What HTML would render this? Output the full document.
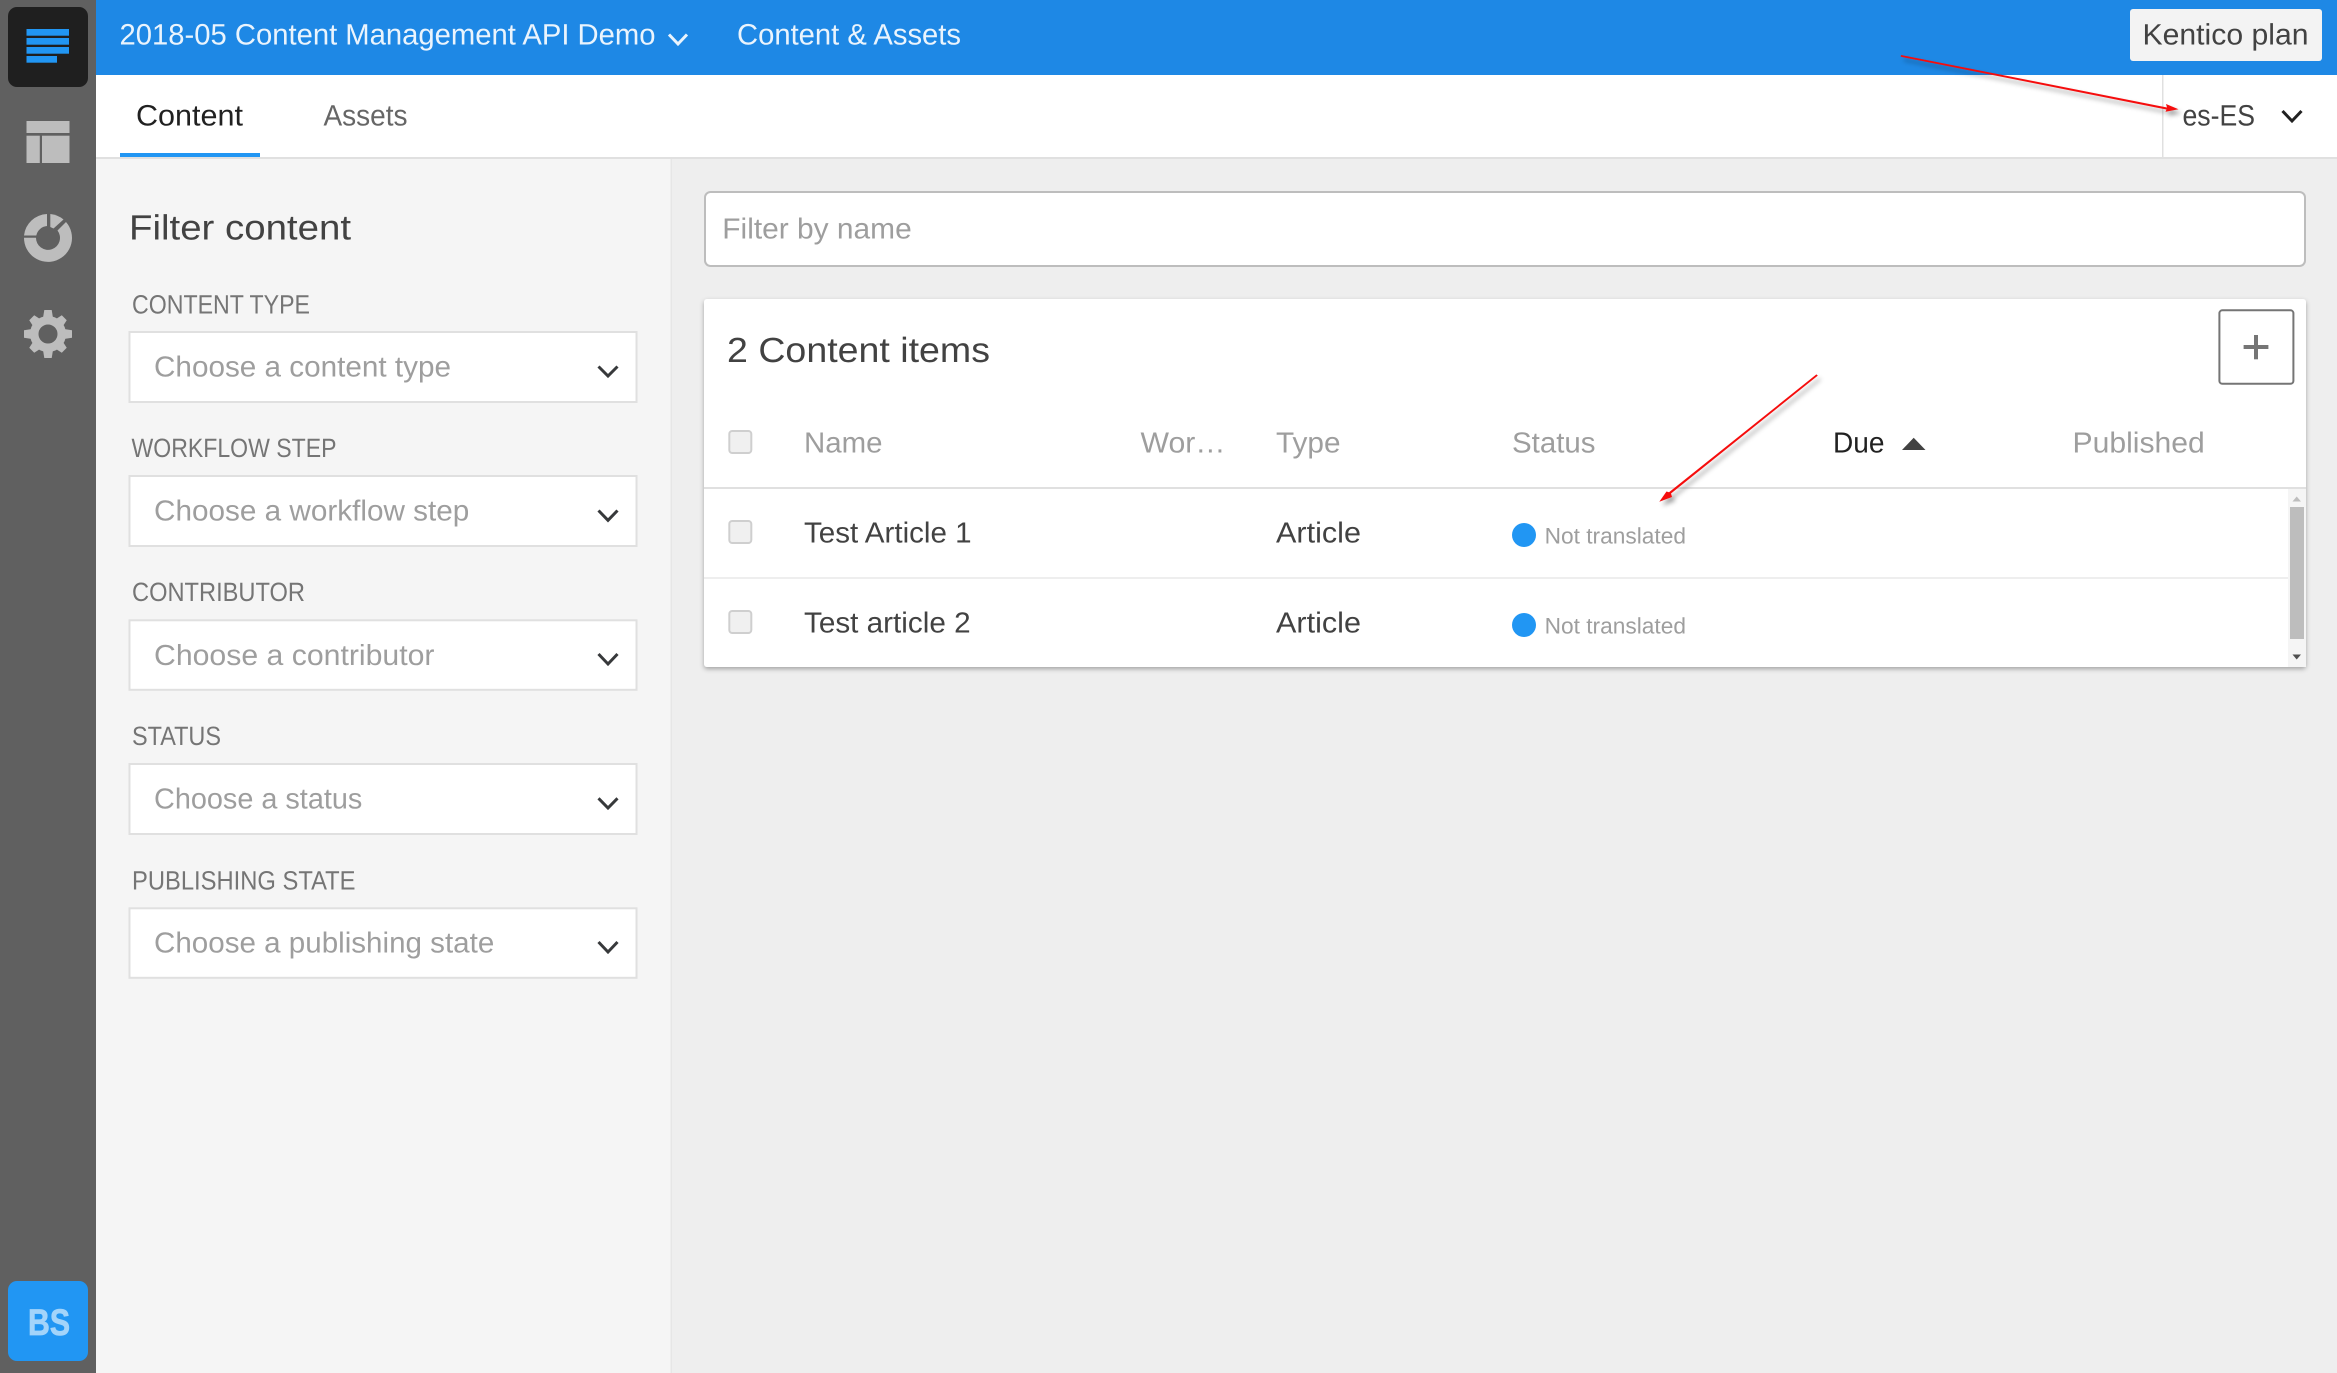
<!DOCTYPE html>
<html lang="en"><head><meta charset="utf-8"><title>Content &amp; Assets</title>
<style>
html,body{margin:0;padding:0;background:#eee;overflow:hidden}
svg{display:block}
text{font-family:"Liberation Sans",sans-serif;text-rendering:geometricPrecision;white-space:pre;transform:translate(-1px,-.6px)}
.h{font-size:29.5px;fill:#eaf4fd}
.t{font-size:29.5px}
.big{font-size:35px;fill:#424242}
.lb{font-size:26.5px;fill:#757575}
.ph{font-size:29px;fill:#9e9e9e}
.th{font-size:29px;fill:#9e9e9e}
.td{font-size:29px;fill:#424242}
.nt{font-size:22.5px;fill:#9e9e9e}
.ch{fill:none;stroke:#37393b;stroke-width:3}
</style></head><body>
<svg xmlns="http://www.w3.org/2000/svg" width="2337" height="1373" viewBox="0 0 2337 1373">
<defs>
<filter id="cs" x="-2%" y="-5%" width="104%" height="110%"><feDropShadow dx="0" dy="2" stdDeviation="2.5" flood-color="#000" flood-opacity=".32"/></filter>
<filter id="as" x="-20%" y="-20%" width="140%" height="140%"><feDropShadow dx="3" dy="4" stdDeviation="2.5" flood-color="#000" flood-opacity=".38"/></filter>
<path id="tooth" d="M43 318L44.3 310H51.7L53 318Z"/>
<path id="toothd" d="M43 318L44.5 311H51.5L53 318Z"/>
</defs>
<rect width="2337" height="1373" fill="#eeeeee"/>

<!-- sidebar -->
<rect width="96" height="1373" fill="#606060"/>
<rect x="8" y="7" width="80" height="80" rx="9" fill="#1f1f1f"/>
<g fill="#2196f3">
<rect x="26.5" y="29" width="42.5" height="6.7"/><rect x="26.5" y="38" width="42.5" height="6.7"/><rect x="26.5" y="47" width="42.5" height="6.7"/><rect x="26.5" y="56" width="30.5" height="6.7"/>
</g>
<g fill="#bdbdbd">
<rect x="26.5" y="121" width="43" height="12"/><rect x="26.5" y="135.7" width="13.3" height="27.3"/><rect x="42" y="135.7" width="27.5" height="27.3"/>
<path d="M24 235.5A24 24 0 0 1 47 214V226A12 12 0 0 0 36.3 235.5Z"/>
<path d="M50.3 214A24 24 0 0 1 63.5 219.5L53.5 228.5L50.3 227Z"/>
<path d="M66 222A24 24 0 1 1 24 237.7H36A12 12 0 1 0 57.5 230.5Z"/>
<circle cx="48" cy="334" r="13.75" fill="none" stroke="#bdbdbd" stroke-width="8.5"/>
<use href="#tooth"/>
<use href="#toothd" transform="rotate(45 48 334)"/>
<use href="#tooth" transform="rotate(90 48 334)"/>
<use href="#toothd" transform="rotate(135 48 334)"/>
<use href="#tooth" transform="rotate(180 48 334)"/>
<use href="#toothd" transform="rotate(225 48 334)"/>
<use href="#tooth" transform="rotate(270 48 334)"/>
<use href="#toothd" transform="rotate(315 48 334)"/>
</g>
<rect x="8" y="1281" width="80" height="80" rx="9" fill="#2196f3"/>
<text x="29" y="1335.6" textLength="42" lengthAdjust="spacingAndGlyphs" style="font-size:37px;font-weight:700;fill:#a3d4fa;stroke:#a3d4fa;stroke-width:.8">BS</text>

<!-- header -->
<rect x="96" width="2241" height="75" fill="#1e88e5"/>
<text class="h" x="120.5" y="45" textLength="536" lengthAdjust="spacingAndGlyphs">2018-05 Content Management API Demo</text>
<path d="M669 34.5L678 44L687 34.5" fill="none" stroke="#eaf4fd" stroke-width="3"/>
<text class="h" x="738" y="45" textLength="224" lengthAdjust="spacingAndGlyphs">Content &amp; Assets</text>
<rect x="2130" y="9" width="192" height="52" rx="3" fill="#f3f3f3"/>
<text class="t" x="2143.5" y="45" textLength="166" lengthAdjust="spacingAndGlyphs" fill="#424242">Kentico plan</text>

<!-- tabs -->
<rect x="96" y="75" width="2241" height="82" fill="#fff"/>
<rect x="96" y="157" width="2241" height="2" fill="#e0e0e0"/>
<rect x="120" y="153" width="140" height="4" fill="#2196f3"/>
<text class="t" x="137" y="126" textLength="107" lengthAdjust="spacingAndGlyphs" fill="#212121">Content</text>
<text class="t" x="324.5" y="126" textLength="84" lengthAdjust="spacingAndGlyphs" fill="#666">Assets</text>
<rect x="2162" y="75" width="1.5" height="82" fill="#e0e0e0"/>
<text class="t" x="2183.5" y="126" textLength="72.5" lengthAdjust="spacingAndGlyphs" fill="#424242">es-ES</text>
<path class="ch" style="stroke:#212121" d="M2282.5 111L2292 121L2301.5 111"/>

<!-- filter panel -->
<rect x="96" y="159" width="574.5" height="1214" fill="#f5f5f5"/>
<rect x="670.5" y="159" width="1.5" height="1214" fill="#e6e6e6"/>
<text class="big" x="130" y="240" textLength="222" lengthAdjust="spacingAndGlyphs">Filter content</text>

<g fill="#fff" stroke="#e0e0e0" stroke-width="2">
<rect x="129.5" y="332" width="507" height="70"/>
<rect x="129.5" y="476" width="507" height="70"/>
<rect x="129.5" y="620.3" width="507" height="69.5"/>
<rect x="129.5" y="764" width="507" height="70"/>
<rect x="129.5" y="908.3" width="507" height="69.5"/>
</g>
<text class="lb" x="133" y="314" textLength="178" lengthAdjust="spacingAndGlyphs">CONTENT TYPE</text>
<text class="lb" x="132.5" y="457.7" textLength="205" lengthAdjust="spacingAndGlyphs">WORKFLOW STEP</text>
<text class="lb" x="133" y="601.7" textLength="173" lengthAdjust="spacingAndGlyphs">CONTRIBUTOR</text>
<text class="lb" x="133" y="745.7" textLength="89" lengthAdjust="spacingAndGlyphs">STATUS</text>
<text class="lb" x="133" y="890" textLength="223.5" lengthAdjust="spacingAndGlyphs">PUBLISHING STATE</text>

<text class="ph" x="155" y="377.3" textLength="297" lengthAdjust="spacingAndGlyphs">Choose a content type</text>
<text class="ph" x="155" y="521" textLength="315.3" lengthAdjust="spacingAndGlyphs">Choose a workflow step</text>
<text class="ph" x="155" y="665.7" textLength="280.5" lengthAdjust="spacingAndGlyphs">Choose a contributor</text>
<text class="ph" x="155" y="809.3" textLength="208.3" lengthAdjust="spacingAndGlyphs">Choose a status</text>
<text class="ph" x="155" y="953.3" textLength="340.3" lengthAdjust="spacingAndGlyphs">Choose a publishing state</text>
<path class="ch" d="M598.5 366.5L608 376L617.5 366.5"/>
<path class="ch" d="M598.5 510.5L608 520.3L617.5 510.5"/>
<path class="ch" d="M598.5 654L608 664L617.5 654"/>
<path class="ch" d="M598.5 798.3L608 808L617.5 798.3"/>
<path class="ch" d="M598.5 942L608 952L617.5 942"/>

<!-- filter by name -->
<rect x="705" y="192" width="1600" height="74" rx="5.5" fill="#fff" stroke="#bdbdbd" stroke-width="2"/>
<text class="ph" x="723.3" y="239.3" textLength="189.4" lengthAdjust="spacingAndGlyphs">Filter by name</text>

<!-- card -->
<rect x="704" y="299" width="1602" height="368" rx="3" fill="#fff" filter="url(#cs)"/>
<text class="big" x="728" y="362.7" textLength="263" lengthAdjust="spacingAndGlyphs">2 Content items</text>
<rect x="2219.4" y="310.3" width="74" height="73.5" rx="3" fill="#fff" stroke="#757575" stroke-width="2"/>
<rect x="2243.6" y="345" width="24.8" height="4" fill="#757575"/><rect x="2254" y="335" width="4" height="24.3" fill="#757575"/>

<g fill="#f0f0f0" stroke="#cfcfcf" stroke-width="2">
<rect x="729.3" y="431" width="22" height="22" rx="3"/>
<rect x="729.3" y="521" width="22" height="22" rx="3"/>
<rect x="729.3" y="611" width="22" height="22" rx="3"/>
</g>
<text class="th" x="805" y="453.3" textLength="78.5" lengthAdjust="spacingAndGlyphs">Name</text>
<text class="th" x="1141.5" y="453.3" textLength="85" lengthAdjust="spacingAndGlyphs">Wor…</text>
<text class="th" x="1277" y="453.3" textLength="64.5" lengthAdjust="spacingAndGlyphs">Type</text>
<text class="th" x="1513" y="453.3" textLength="83.5" lengthAdjust="spacingAndGlyphs">Status</text>
<text class="th" style="fill:#212121" x="1834" y="453.3" textLength="51.5" lengthAdjust="spacingAndGlyphs">Due</text>
<path d="M1902 450L1913.7 437.7L1925.5 450Z" fill="#424242"/>
<text class="th" x="2073.5" y="453.3" textLength="132.3" lengthAdjust="spacingAndGlyphs">Published</text>

<rect x="704" y="487" width="1602" height="2" fill="#e0e0e0"/>
<rect x="704" y="577" width="1584" height="2" fill="#eeeeee"/>
<text class="td" x="805" y="543.3" textLength="167.6" lengthAdjust="spacingAndGlyphs">Test Article 1</text>
<text class="td" x="805" y="633.3" textLength="166.6" lengthAdjust="spacingAndGlyphs">Test article 2</text>
<text class="td" x="1277" y="543.3" textLength="85" lengthAdjust="spacingAndGlyphs">Article</text>
<text class="td" x="1277" y="633.3" textLength="85" lengthAdjust="spacingAndGlyphs">Article</text>
<circle cx="1524" cy="535" r="12" fill="#2196f3"/>
<circle cx="1524" cy="625" r="12" fill="#2196f3"/>
<text class="nt" x="1545.6" y="544" textLength="141.4" lengthAdjust="spacingAndGlyphs">Not translated</text>
<text class="nt" x="1545.6" y="634" textLength="141.4" lengthAdjust="spacingAndGlyphs">Not translated</text>

<!-- scrollbar -->
<rect x="2288" y="489" width="18" height="178" fill="#f5f5f5"/>
<rect x="2290" y="507" width="14" height="132" fill="#bdbdbd"/>
<path d="M2292.5 501.5L2296.7 496.5L2301 501.5Z" fill="#bdbdbd"/>
<path d="M2292.5 654.5L2296.7 659.5L2301 654.5Z" fill="#505050"/>

<!-- annotation arrows -->
<g filter="url(#as)" fill="#f50d0d" stroke="none">
<path d="M1901 55L2167 107.5L2166 104L2178.5 109.3L2165.5 111.7L2166.5 109.5L1900.7 56.7Z"/>
<path d="M1816.4 374.4L1817.8 375.6L1671 493.5L1672 497L1659.3 501.7L1666.5 491.5L1669 492.3Z"/>
</g>
</svg>
</body></html>
